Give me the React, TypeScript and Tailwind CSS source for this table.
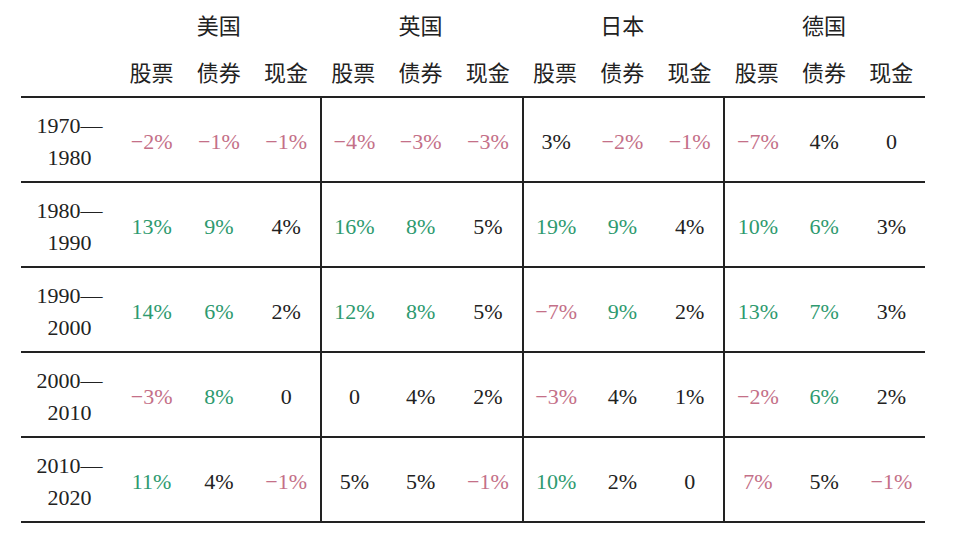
import React from 'react'

type Tone = 'neg' | 'pos' | 'flat'

const countries = ['美国', '英国', '日本', '德国']
const kinds = ['股票', '债券', '现金']

const rows: { from: string; to: string; cells: [string, Tone][] }[] = [
  {
    from: '1970—',
    to: '1980',
    cells: [
      ['−2%', 'neg'], ['−1%', 'neg'], ['−1%', 'neg'],
      ['−4%', 'neg'], ['−3%', 'neg'], ['−3%', 'neg'],
      ['3%', 'flat'], ['−2%', 'neg'], ['−1%', 'neg'],
      ['−7%', 'neg'], ['4%', 'flat'], ['0', 'flat'],
    ],
  },
  {
    from: '1980—',
    to: '1990',
    cells: [
      ['13%', 'pos'], ['9%', 'pos'], ['4%', 'flat'],
      ['16%', 'pos'], ['8%', 'pos'], ['5%', 'flat'],
      ['19%', 'pos'], ['9%', 'pos'], ['4%', 'flat'],
      ['10%', 'pos'], ['6%', 'pos'], ['3%', 'flat'],
    ],
  },
  {
    from: '1990—',
    to: '2000',
    cells: [
      ['14%', 'pos'], ['6%', 'pos'], ['2%', 'flat'],
      ['12%', 'pos'], ['8%', 'pos'], ['5%', 'flat'],
      ['−7%', 'neg'], ['9%', 'pos'], ['2%', 'flat'],
      ['13%', 'pos'], ['7%', 'pos'], ['3%', 'flat'],
    ],
  },
  {
    from: '2000—',
    to: '2010',
    cells: [
      ['−3%', 'neg'], ['8%', 'pos'], ['0', 'flat'],
      ['0', 'flat'], ['4%', 'flat'], ['2%', 'flat'],
      ['−3%', 'neg'], ['4%', 'flat'], ['1%', 'flat'],
      ['−2%', 'neg'], ['6%', 'pos'], ['2%', 'flat'],
    ],
  },
  {
    from: '2010—',
    to: '2020',
    cells: [
      ['11%', 'pos'], ['4%', 'flat'], ['−1%', 'neg'],
      ['5%', 'flat'], ['5%', 'flat'], ['−1%', 'neg'],
      ['10%', 'pos'], ['2%', 'flat'], ['0', 'flat'],
      ['7%', 'neg'], ['5%', 'flat'], ['−1%', 'neg'],
    ],
  },
]

const toneClass: Record<Tone, string> = {
  neg: 'text-[#c47088]',
  pos: 'text-[#2e9a6f]',
  flat: 'text-[#222222]',
}

const cjk = "font-['Noto_Sans_CJK_SC','Noto_Sans',sans-serif]"
const serif = "font-['Liberation_Serif','Times_New_Roman',serif]"

export default function App() {
  return (
    <div className="w-[957px] h-[546px] bg-white pl-[21px] text-[#222222]">
      <div className="w-[904px]">
        <div className="grid grid-cols-[97px_repeat(4,1fr)] h-[48px] items-center">
          <div />
          {countries.map((c) => (
            <div key={c} className={`${cjk} text-[22px] leading-none text-center`}>
              {c}
            </div>
          ))}
        </div>

        <div className="grid grid-cols-[97px_repeat(12,1fr)] h-[50px] items-center border-b-2 border-[#222222]">
          <div />
          {countries.flatMap((c) =>
            kinds.map((k) => (
              <div key={c + k} className={`${cjk} text-[22px] leading-none text-center pb-[2px]`}>
                {k}
              </div>
            )),
          )}
        </div>

        {rows.map((r) => (
          <div
            key={r.from}
            className="grid grid-cols-[97px_repeat(12,1fr)] h-[85px] border-b-2 border-[#222222]"
          >
            <div className={`${serif} text-[22px] leading-[32px] text-center flex flex-col justify-center pt-[4px]`}>
              <span>{r.from}</span>
              <span>{r.to}</span>
            </div>
            {r.cells.map(([v, tone], i) => (
              <div
                key={i}
                className={`${serif} text-[22px] flex items-center justify-center pt-[4px] ${toneClass[tone]} ${
                  i > 0 && i % 3 === 0 ? 'border-l-2 border-[#222222]' : ''
                }`}
              >
                {v}
              </div>
            ))}
          </div>
        ))}
      </div>
    </div>
  )
}
